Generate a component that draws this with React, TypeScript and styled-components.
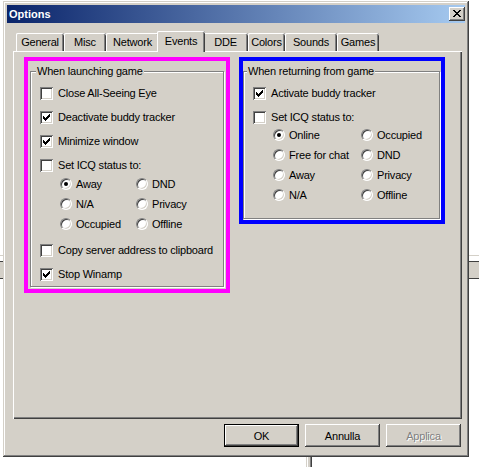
import React from "react";
import styled, { createGlobalStyle, css } from "styled-components";

const FACE = "#D4D0C8";
const SHADOW = "#808080";
const DARK = "#404040";
const FONT = `"Liberation Sans", Arial, sans-serif`;

const GlobalStyle = createGlobalStyle`
  html, body { margin: 0; padding: 0; background: #fff; }
  body { font-family: ${FONT}; font-size: 11px; color: #000; letter-spacing: -0.2px; }
  * { box-sizing: border-box; }
`;

const Desktop = styled.div`
  position: relative;
  width: 479px;
  height: 467px;
  overflow: hidden;
  background: #fff;
  padding: 1px 0 0 3px;
`;

const BackWindowBar = styled.div`
  position: absolute;
  left: 0;
  top: 255px;
  width: 479px;
  height: 24px;
  background: linear-gradient(
    to bottom,
    ${FACE} 0 1px,
    #fff 1px 6px,
    ${DARK} 6px 7px,
    ${FACE} 7px 23px,
    ${DARK} 23px 24px
  );
`;

const BackWindowEdge = styled.div`
  position: absolute;
  left: 306px;
  top: 430px;
  width: 6px;
  height: 40px;
  background: linear-gradient(
    to right,
    ${FACE} 0 1px,
    #fff 1px 2px,
    ${FACE} 2px 4px,
    ${SHADOW} 4px 5px,
    ${DARK} 5px 6px
  );
`;

const Dialog = styled.div`
  position: relative;
  z-index: 1;
  width: 466px;
  height: 456px;
  padding: 4px;
  background: ${FACE};
  box-shadow: inset -1px -1px ${DARK}, inset 1px 1px ${FACE},
    inset -2px -2px ${SHADOW}, inset 2px 2px #fff;
  display: flex;
  flex-direction: column;
`;

const TitleBar = styled.div`
  height: 18px;
  flex: none;
  display: flex;
  align-items: center;
  justify-content: space-between;
  padding-left: 2px;
  background: linear-gradient(to right, #0a246a, #a6caf0);
`;

const TitleText = styled.span`
  color: #fff;
  font-weight: bold;
  font-size: 11px;
  line-height: 13px;
  letter-spacing: 0;
`;

const CaptionButton = styled.div`
  width: 16px;
  height: 14px;
  background: ${FACE};
  box-shadow: inset -1px -1px ${DARK}, inset 1px 1px #fff,
    inset -2px -2px ${SHADOW}, inset 2px 2px ${FACE};
  display: flex;
  align-items: center;
  justify-content: center;
  padding-bottom: 1px;
`;

const TabStrip = styled.div`
  margin-top: 8px;
  height: 20px;
  flex: none;
  display: flex;
  align-items: flex-end;
  padding-left: 9px;
  position: relative;
  z-index: 2;
`;

const Tab = styled.div<{ $w: number; $active?: boolean }>`
  width: ${(p) => p.$w}px;
  height: 18px;
  flex: none;
  display: flex;
  align-items: center;
  justify-content: center;
  background: ${FACE};
  border-top-left-radius: 2px;
  border-top-right-radius: 2px;
  box-shadow: inset 1px 0 #fff, inset 0 1px #fff, inset -1px 0 ${DARK},
    inset -2px 0 ${SHADOW};
  white-space: nowrap;
  ${(p) =>
    p.$active &&
    css`
      width: ${p.$w + 4}px;
      height: 21px;
      margin: 0 -2px -1px;
      padding-bottom: 2px;
      position: relative;
      z-index: 1;
    `}
`;

const Panel = styled.div`
  margin-left: 6px;
  width: 449px;
  height: 368px;
  flex: none;
  padding: 6px 0 0 11px;
  box-shadow: inset 1px 1px #fff, inset -1px -1px ${DARK},
    inset -2px -2px ${SHADOW};
  display: flex;
  align-items: flex-start;
  gap: 9px;
`;

const Highlight = styled.div<{ $color: string; $h: number }>`
  width: 206px;
  height: ${(p) => p.$h}px;
  flex: none;
  border: 4px solid ${(p) => p.$color};
  display: flex;
`;

const GroupBox = styled.fieldset<{ $m: string }>`
  flex: 1;
  min-width: 0;
  min-inline-size: 0;
  margin: ${(p) => p.$m};
  padding: 7px 0 0 9px;
  border: 1px solid ${SHADOW};
  box-shadow: inset 1px 1px #fff, 1px 1px #fff;
  display: flex;
  flex-direction: column;
  gap: 8px;
`;

const Legend = styled.legend<{ $ml: number }>`
  margin-left: ${(p) => p.$ml}px;
  padding: 0 1px;
  background: ${FACE};
  line-height: 13px;
  font-size: 11px;
  white-space: nowrap;
`;

const OptionRow = styled.div<{ $gap: number }>`
  display: flex;
  align-items: center;
  height: 16px;
  gap: ${(p) => p.$gap}px;
  white-space: nowrap;
`;

const CheckBox = styled.span`
  width: 13px;
  height: 13px;
  flex: none;
  background: #fff;
  box-shadow: inset 1px 1px ${SHADOW}, inset -1px -1px #fff,
    inset 2px 2px ${DARK}, inset -2px -2px ${FACE};
  display: flex;
  align-items: center;
  justify-content: center;
`;

const Radio = styled.span<{ $checked?: boolean }>`
  width: 12px;
  height: 12px;
  flex: none;
  border-radius: 50%;
  background: #fff;
  border: 1px solid;
  border-color: ${SHADOW} #fff #fff ${SHADOW};
  box-shadow: inset 1px 1px ${DARK}, inset -1px -1px ${FACE};
  display: flex;
  align-items: center;
  justify-content: center;
  &::after {
    content: "";
    width: 4px;
    height: 4px;
    border-radius: 50%;
    background: #000;
    display: ${(p) => (p.$checked ? "block" : "none")};
  }
`;

const RadioGrid = styled.div<{ $col: number; $m: string }>`
  display: grid;
  grid-template-columns: ${(p) => p.$col}px auto;
  row-gap: 4px;
  padding-left: 20px;
  margin: ${(p) => p.$m};
`;

const ButtonRow = styled.div`
  display: flex;
  justify-content: flex-end;
  gap: 6px;
  margin-top: 5px;
  padding-right: 4px;
`;

const Button = styled.button<{ $default?: boolean }>`
  width: 75px;
  height: 23px;
  padding: 0;
  border: 0;
  background: ${FACE};
  font-family: ${FONT};
  font-size: 11px;
  letter-spacing: -0.2px;
  color: #000;
  box-shadow: inset -1px -1px ${DARK}, inset 1px 1px #fff,
    inset -2px -2px ${SHADOW}, inset 2px 2px ${FACE};
  ${(p) =>
    p.$default &&
    css`
      box-shadow: inset 0 0 0 1px #000, inset -2px -2px ${DARK},
        inset 2px 2px #fff, inset -3px -3px ${SHADOW};
    `}
  &:disabled {
    color: ${SHADOW};
    text-shadow: 1px 1px #fff;
  }
`;

const CloseGlyph = () => (
  <svg width="8" height="7" viewBox="0 0 8 7" shapeRendering="crispEdges">
    <path
      fill="#000"
      d="M0 0h2v1H0z M6 0h2v1H6z M1 1h2v1H1z M5 1h2v1H5z M2 2h4v1H2z M3 3h2v1H3z M2 4h4v1H2z M1 5h2v1H1z M5 5h2v1H5z M0 6h2v1H0z M6 6h2v1H6z"
    />
  </svg>
);

const CheckMark = () => (
  <svg width="7" height="7" viewBox="0 0 7 7" shapeRendering="crispEdges">
    <path
      fill="#000"
      d="M6 0h1v1H6z M5 1h2v1H5z M0 2h1v1H0z M4 2h3v1H4z M0 3h2v1H0z M3 3h3v1H3z M0 4h5v1H0z M1 5h3v1H1z M2 6h1v1H2z"
    />
  </svg>
);

const Check = ({ label, checked }: { label: string; checked?: boolean }) => (
  <OptionRow $gap={5}>
    <CheckBox>{checked && <CheckMark />}</CheckBox>
    <span>{label}</span>
  </OptionRow>
);

const RadioOpt = ({ label, checked }: { label: string; checked?: boolean }) => (
  <OptionRow $gap={4}>
    <Radio $checked={checked} />
    <span>{label}</span>
  </OptionRow>
);

const tabs: { label: string; w: number; active?: boolean }[] = [
  { label: "General", w: 48 },
  { label: "Misc", w: 42 },
  { label: "Network", w: 53 },
  { label: "Events", w: 44, active: true },
  { label: "DDE", w: 45 },
  { label: "Colors", w: 37 },
  { label: "Sounds", w: 52 },
  { label: "Games", w: 42 },
];

export default function App() {
  return (
    <>
      <GlobalStyle />
      <Desktop>
        <BackWindowBar />
        <BackWindowEdge />
        <Dialog>
          <TitleBar>
            <TitleText>Options</TitleText>
            <CaptionButton>
              <CloseGlyph />
            </CaptionButton>
          </TitleBar>
          <TabStrip>
            {tabs.map((t) => (
              <Tab key={t.label} $w={t.w} $active={t.active}>
                {t.label}
              </Tab>
            ))}
          </TabStrip>
          <Panel>
            <Highlight $color="#ff00ff" $h={236}>
              <GroupBox $m="4px 2px 2px 2px">
                <Legend $ml={-4}>When launching game</Legend>
                <Check label="Close All-Seeing Eye" />
                <Check label="Deactivate buddy tracker" checked />
                <Check label="Minimize window" checked />
                <Check label="Set ICQ status to:" />
                <RadioGrid $col={76} $m="-5px 0 2px">
                  <RadioOpt label="Away" checked />
                  <RadioOpt label="DND" />
                  <RadioOpt label="N/A" />
                  <RadioOpt label="Privacy" />
                  <RadioOpt label="Occupied" />
                  <RadioOpt label="Offline" />
                </RadioGrid>
                <Check label="Copy server address to clipboard" />
                <Check label="Stop Winamp" checked />
              </GroupBox>
            </Highlight>
            <Highlight $color="#0000ff" $h={167}>
              <GroupBox $m="4px 1px 1px 0">
                <Legend $ml={-6}>When returning from game</Legend>
                <Check label="Activate buddy tracker" checked />
                <Check label="Set ICQ status to:" />
                <RadioGrid $col={88} $m="-6px 0 0">
                  <RadioOpt label="Online" checked />
                  <RadioOpt label="Occupied" />
                  <RadioOpt label="Free for chat" />
                  <RadioOpt label="DND" />
                  <RadioOpt label="Away" />
                  <RadioOpt label="Privacy" />
                  <RadioOpt label="N/A" />
                  <RadioOpt label="Offline" />
                </RadioGrid>
              </GroupBox>
            </Highlight>
          </Panel>
          <ButtonRow>
            <Button $default>OK</Button>
            <Button>Annulla</Button>
            <Button disabled>Applica</Button>
          </ButtonRow>
        </Dialog>
      </Desktop>
    </>
  );
}
